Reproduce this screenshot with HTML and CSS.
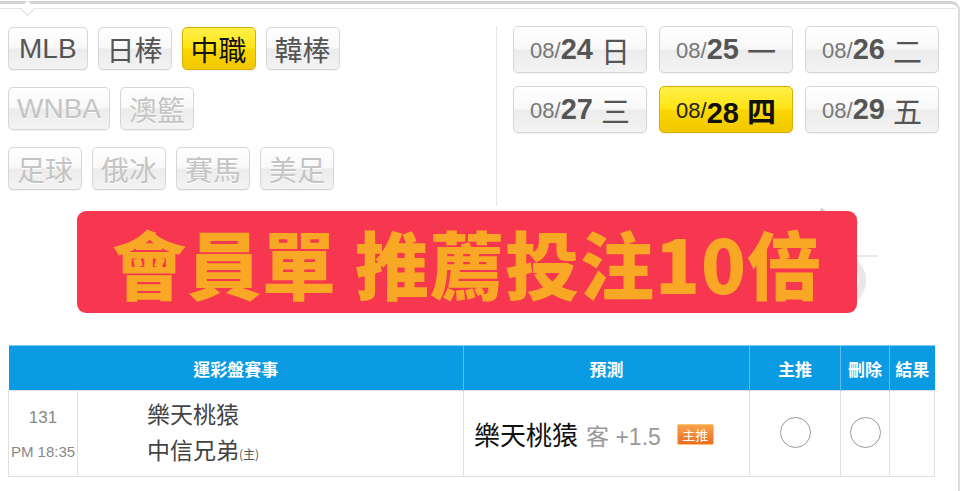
FILE: index.html
```html
<!DOCTYPE html>
<html lang="zh-Hant">
<head>
<meta charset="utf-8">
<link rel="stylesheet" href="styles.css">
</head>
<body>
<div class="frame">
  <div class="topline"><span class="notch"></span></div>
  <div class="top">
    <div class="leagues">
      <div class="brow">
        <span class="btn wide">MLB</span>
        <span class="btn">日棒</span>
        <span class="btn on">中職</span>
        <span class="btn">韓棒</span>
      </div>
      <div class="brow">
        <span class="btn off">WNBA</span>
        <span class="btn off">澳籃</span>
      </div>
      <div class="brow">
        <span class="btn off">足球</span>
        <span class="btn off">俄冰</span>
        <span class="btn off">賽馬</span>
        <span class="btn off">美足</span>
      </div>
    </div>
    <div class="dates">
      <span class="dbtn"><span class="m">08/</span><b>24</b> 日</span>
      <span class="dbtn"><span class="m">08/</span><b>25</b> 一</span>
      <span class="dbtn"><span class="m">08/</span><b>26</b> 二</span>
      <span class="dbtn"><span class="m">08/</span><b>27</b> 三</span>
      <span class="dbtn on"><span class="m">08/</span><b>28 四</b></span>
      <span class="dbtn"><span class="m">08/</span><b>29</b> 五</span>
    </div>
  </div>
  <div class="mid">
    <div class="banner">會員單 推薦投注10倍</div>
    <svg class="mark" width="60" height="110" viewBox="0 0 60 110">
      <path d="M2 4 L22 16" stroke="#d4d4d4" stroke-width="5" stroke-dasharray="5 7" fill="none"/>
      <path d="M30 10 L40 18" stroke="#dddddd" stroke-width="4" fill="none"/>
      <path d="M30 50 L60 50" stroke="#e2e2e2" stroke-width="1.5" fill="none"/>
      <path d="M36 56 Q52 72 38 92" stroke="#e8e8e8" stroke-width="7" fill="none"/>
    </svg>
  </div>
  <table class="games">
    <colgroup>
      <col class="c1"><col class="c2"><col class="c3"><col class="c4"><col class="c5"><col class="c6">
    </colgroup>
    <thead>
      <tr>
        <th colspan="2">運彩盤賽事</th>
        <th>預測</th>
        <th>主推</th>
        <th>刪除</th>
        <th>結果</th>
      </tr>
    </thead>
    <tbody>
      <tr>
        <td class="no"><div class="num">131</div><div class="time">PM 18:35</div></td>
        <td class="teams"><div>樂天桃猿</div><div>中信兄弟<small>(主)</small></div></td>
        <td class="pick"><span class="tname">樂天桃猿</span><span class="side">客 +1.5</span><span class="badge">主推</span></td>
        <td class="mid-c"><span class="circle"></span></td>
        <td class="mid-c"><span class="circle"></span></td>
        <td></td>
      </tr>
    </tbody>
  </table>
</div>
</body>
</html>
```

FILE: styles.css
```css
* { box-sizing: border-box; }
html, body { margin: 0; padding: 0; background: #fff; }
body {
  width: 971px;
  height: 491px;
  overflow: hidden;
  font-family: "Liberation Sans", "Noto Sans CJK TC", sans-serif;
  color: #555;
}
.frame {
  position: relative;
  margin-top: 1px;
  width: 960px;
  height: 490px;
  border-top: 3px solid #d4d4d4;
  border-right: 2px solid #dcdcdc;
  border-top-right-radius: 9px;
}
.topline {
  position: relative;
  margin-top: 4px;
  height: 1px;
  background: #e6e6e6;
  margin-right: 2px;
}
.notch {
  position: absolute;
  left: 22px;
  top: -5px;
  width: 11px;
  height: 11px;
  background: #fff;
  border-right: 1px solid #dcdcdc;
  border-bottom: 1px solid #dcdcdc;
  transform: rotate(45deg);
}
.top {
  display: flex;
  padding-top: 17px;
}
.leagues {
  width: 497px;
  padding: 1px 0 16px 8px;
  border-right: 1px solid #e4e4e4;
  display: flex;
  flex-direction: column;
  gap: 17px;
}
.brow {
  display: flex;
  gap: 10px;
}
.btn {
  height: 43px;
  padding: 0 8px;
  display: flex;
  align-items: center;
  justify-content: center;
  font-size: 28px;
  color: #555;
  border: 1px solid #d6d6d6;
  border-radius: 5px;
  background: linear-gradient(#ffffff 0%, #f8f8f8 48%, #ececec 52%, #f3f3f3 100%);
  box-shadow: 0 1px 1px rgba(0,0,0,0.06);
}
.btn.wide { padding: 0 10px; }
.btn.on {
  color: #111;
  border-color: #d8ae00;
  background: linear-gradient(#fff04a 0%, #ffe414 48%, #fbd600 52%, #f2c800 100%);
}
.btn.off {
  color: #c4c4c4;
  text-shadow: 0 1px 0 #fff;
}
.dates {
  padding-left: 16px;
  display: grid;
  grid-template-columns: repeat(3, 134px);
  grid-auto-rows: 47px;
  column-gap: 12px;
  row-gap: 13px;
  align-content: start;
}
.dbtn {
  display: flex;
  align-items: center;
  justify-content: center;
  font-size: 29px;
  color: #555;
  white-space: pre;
  border: 1px solid #d6d6d6;
  border-radius: 5px;
  background: linear-gradient(#ffffff 0%, #f8f8f8 48%, #ececec 52%, #f3f3f3 100%);
  box-shadow: 0 1px 1px rgba(0,0,0,0.06);
}
.dbtn .m {
  font-size: 22px;
  color: #777;
  padding-top: 3px;
}
.dbtn b { font-weight: bold; }
.dbtn.on {
  color: #111;
  border-color: #d8ae00;
  background: linear-gradient(#fff04a 0%, #ffe414 48%, #fbd600 52%, #f2c800 100%);
}
.dbtn.on .m { color: #222; }
.mid {
  position: relative;
  padding: 5px 0 0 77px;
}
.banner {
  position: relative;
  z-index: 1;
  width: 780px;
  height: 102px;
  border-radius: 9px;
  background: #f7364f;
  color: #f9a826;
  font-family: "Noto Sans CJK TC", sans-serif;
  font-weight: 900;
  font-size: 74px;
  line-height: 102px;
  text-align: center;
  white-space: pre;
  letter-spacing: 1px;
}
.mark {
  position: absolute;
  left: 818px;
  top: 0;
}
.games {
  margin: 32px 0 0 8px;
  width: 926px;
  border-collapse: collapse;
  table-layout: fixed;
}
.c1 { width: 69px; }
.c2 { width: 386px; }
.c3 { width: 286px; }
.c4 { width: 91px; }
.c5 { width: 49px; }
.c6 { width: 45px; }
.games th {
  height: 45px;
  padding: 0;
  background: #0b9be3;
  color: #fff;
  font-family: "Noto Sans CJK TC", sans-serif;
  font-weight: bold;
  font-size: 17px;
  border-left: 1px solid #5fbdee;
  border-top: 1px solid #7cc9f0;
}
.games th:first-child { border-left: none; }
.games td {
  height: 86px;
  padding: 0;
  border: 1px solid #e0e0e0;
  vertical-align: middle;
}
.no {
  text-align: center;
  color: #888;
}
.num { font-size: 17px; line-height: 22px; margin-bottom: 14px; }
.time { font-size: 15px; line-height: 18px; color: #888; }
.teams {
  padding-left: 69px !important;
  font-family: "Noto Sans CJK TC", sans-serif;
  font-size: 23px;
  line-height: 36px;
  color: #444;
}
.teams small { font-size: 12px; color: #555; }
.pick {
  padding-left: 10px !important;
  white-space: nowrap;
  font-family: "Noto Sans CJK TC", sans-serif;
}
.tname { font-size: 26px; color: #111; }
.side {
  margin-left: 8px;
  font-family: "Liberation Sans", "Noto Sans CJK TC", sans-serif;
  font-size: 23px;
  color: #999;
}
.badge {
  display: inline-block;
  margin-left: 16px;
  width: 37px;
  height: 21px;
  line-height: 19px;
  vertical-align: 5px;
  text-align: center;
  font-size: 13px;
  color: #fff;
  border: 1px solid #fbc46a;
  border-radius: 2px;
  background: linear-gradient(#f9a24c, #ec6d22);
}
.mid-c { text-align: center; padding-bottom: 3px !important; }
.circle {
  display: inline-block;
  width: 31px;
  height: 31px;
  border: 1.5px solid #999;
  border-radius: 50%;
  vertical-align: middle;
}
```
